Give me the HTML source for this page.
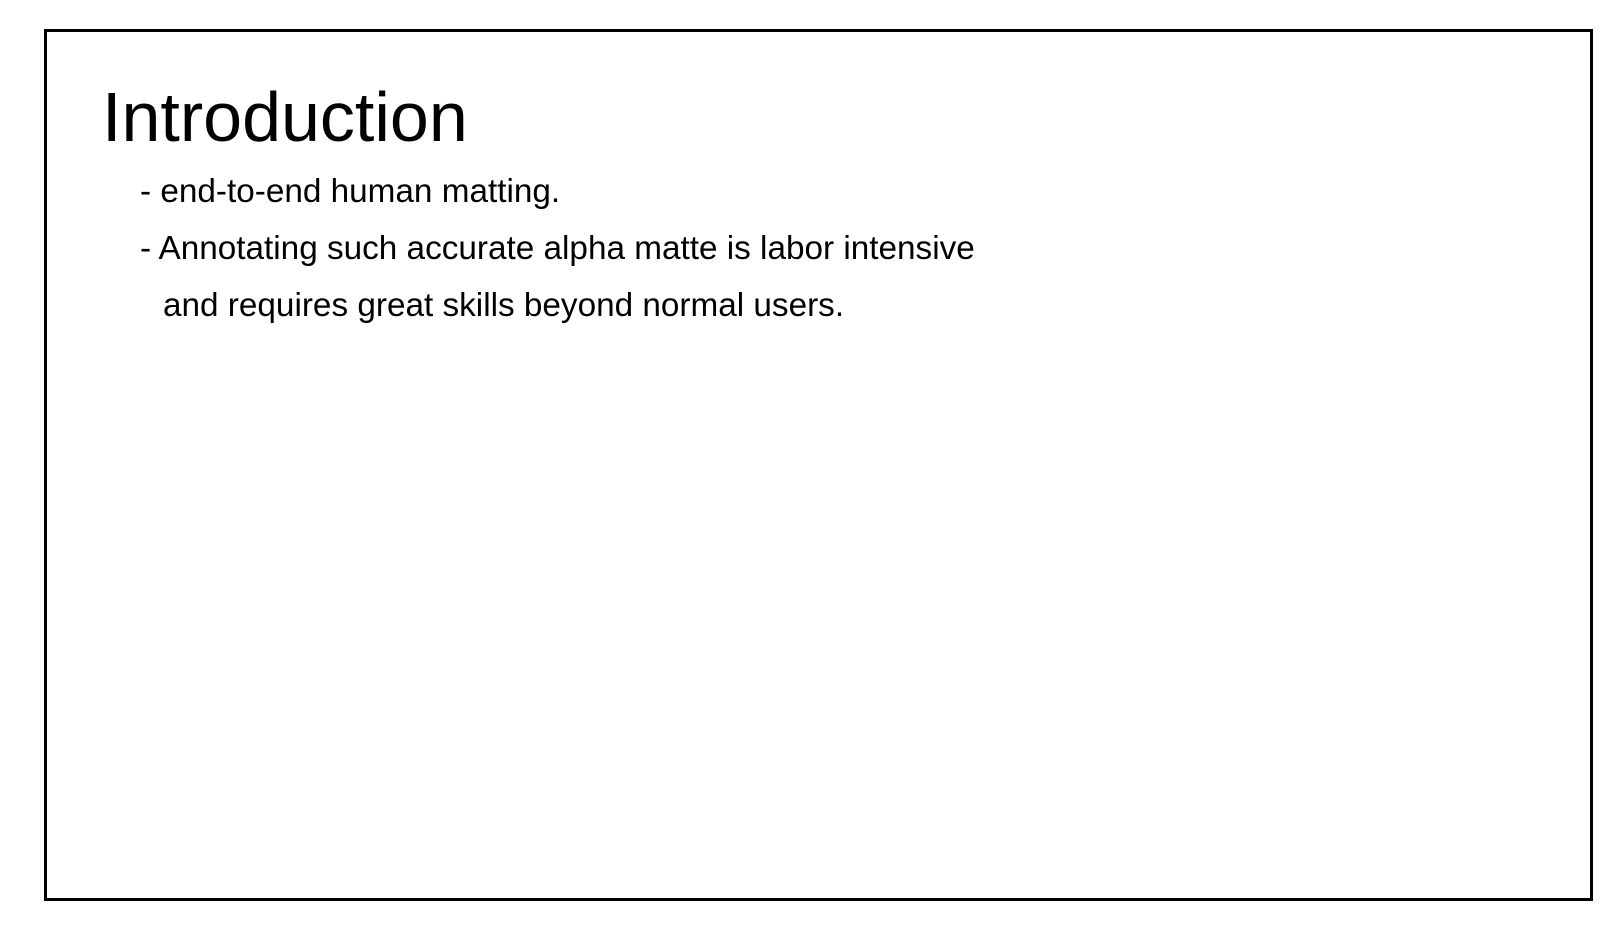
<!DOCTYPE html>
<html><head><meta charset="utf-8"><style>
html,body{margin:0;padding:0;background:#fff;width:1620px;height:944px;overflow:hidden}
.box{position:absolute;left:44px;top:29px;width:1543px;height:866px;border:3px solid #000}
.t{position:absolute;font-family:"Liberation Sans",sans-serif;color:#000;line-height:1;white-space:nowrap}
</style></head><body>
<div class="box"></div>
<div class="t" style="left:102px;top:82px;font-size:70px">Introduction</div>
<div class="t" style="left:140px;top:175px;font-size:33.3px">- end-to-end human matting.</div>
<div class="t" style="left:140px;top:232px;font-size:33.3px">- Annotating such accurate alpha matte is labor intensive</div>
<div class="t" style="left:163px;top:289px;font-size:33.3px">and requires great skills beyond normal users.</div>
</body></html>
